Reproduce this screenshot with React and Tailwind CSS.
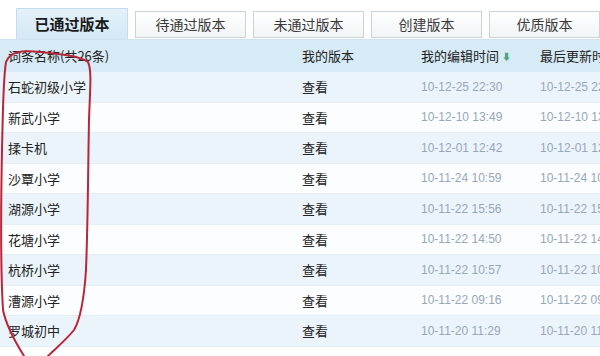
import React from 'react'

const tabs = ['已通过版本', '待通过版本', '未通过版本', '创建版本', '优质版本']

const rows = [
  { name: '石蛇初级小学', edit: '10-12-25 22:30', last: '10-12-25 22:30' },
  { name: '新武小学', edit: '10-12-10 13:49', last: '10-12-10 13:49' },
  { name: '揉卡机', edit: '10-12-01 12:42', last: '10-12-01 12:42' },
  { name: '沙覃小学', edit: '10-11-24 10:59', last: '10-11-24 10:59' },
  { name: '湖源小学', edit: '10-11-22 15:56', last: '10-11-22 15:56' },
  { name: '花塘小学', edit: '10-11-22 14:50', last: '10-11-22 14:50' },
  { name: '杭桥小学', edit: '10-11-22 10:57', last: '10-11-22 10:57' },
  { name: '漕源小学', edit: '10-11-22 09:16', last: '10-11-22 09:16' },
  { name: '罗城初中', edit: '10-11-20 11:29', last: '10-11-20 11:29' },
]

const cjk = { fontFamily: '"Noto Sans CJK SC", "Liberation Sans", sans-serif' }
const latin = { fontFamily: '"Liberation Sans", sans-serif' }

const App = () => {
  return (
    <div className="relative w-[600px] h-[356px] overflow-hidden bg-white" style={cjk}>
      {/* Tabs */}
      <div className="flex items-end gap-[7px] h-[40px] pl-[16px] bg-white border-b border-[#cfe3f0]">
        {tabs.map((t, i) =>
          i === 0 ? (
            <div
              key={t}
              className="w-[113px] h-[31px] flex items-center justify-center bg-gradient-to-b from-[#e4f1fa] to-[#d3e8f5] border border-b-0 border-[#c4dcec] text-[15px] font-bold text-[#1a1a1a]"
            >
              {t}
            </div>
          ) : (
            <div
              key={t}
              className="w-[112px] h-[27px] mb-[1px] flex items-center justify-center bg-gradient-to-b from-[#ffffff] to-[#f1f4f6] border border-[#c9d3da] text-[14px] text-[#3a3a3a]"
            >
              {t}
            </div>
          )
        )}
      </div>

      {/* Header */}
      <div className="grid grid-cols-[294px_119px_119px_1fr] items-center h-[32px] bg-[#d7ebf6] text-[13px] text-[#222] whitespace-nowrap">
        <div className="pl-[8px]">词条名称(共26条)</div>
        <div className="pl-[8px]">我的版本</div>
        <div className="pl-[8px] flex items-center gap-[3px]">
          我的编辑时间
          <span className="text-[9px] text-[#4aa37a] leading-none">⬇</span>
        </div>
        <div className="pl-[8px] overflow-hidden">最后更新时间</div>
      </div>

      {/* Rows */}
      <div>
        {rows.map((r, i) => (
          <div
            key={r.name}
            className={`grid grid-cols-[294px_119px_119px_1fr] items-center h-[30.5px] border-b border-[#e4eef5] whitespace-nowrap ${
              i % 2 === 0 ? 'bg-[#ebf4fa]' : 'bg-[#fbfdfe]'
            }`}
          >
            <div className="pl-[8px] text-[13px] text-[#222]">{r.name}</div>
            <div className="pl-[8px] text-[13px] text-[#222]">查看</div>
            <div className="pl-[8px] text-[12px] text-[#97a7ba]" style={latin}>
              {r.edit}
            </div>
            <div className="pl-[8px] text-[12px] text-[#97a7ba] overflow-hidden" style={latin}>
              {r.last}
            </div>
          </div>
        ))}
      </div>

      {/* Red hand-drawn annotation */}
      <svg className="absolute inset-0 pointer-events-none" width="600" height="356" viewBox="0 0 600 356">
        <path
          d="M24 356 C14 340 6 325 3 310 C0 260 1 200 2 150 C3 110 3 80 6 62 C10 52 20 50 40 52 C60 54 80 56 88 62 C92 70 90 90 89 120 C88 170 88 220 86 270 C84 300 80 320 74 330 C66 340 56 348 48 356"
          fill="none"
          stroke="#b8263a"
          strokeWidth="2"
          strokeLinecap="round"
        />
      </svg>
    </div>
  )
}

export default App
